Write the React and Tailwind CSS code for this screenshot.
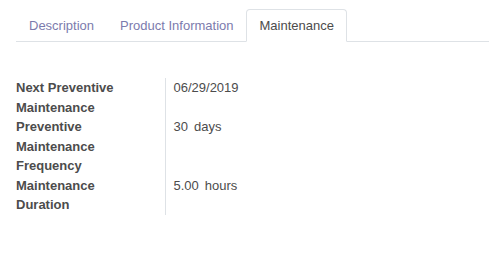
import React from "react";

const tabs = ["Description", "Product Information", "Maintenance"];

const rows = [
  { label: "Next Preventive Maintenance", value: "06/29/2019" },
  { label: "Preventive Maintenance Frequency", value: ["30", "days"] },
  { label: "Maintenance Duration", value: ["5.00", "hours"] },
];

const App = () => {
  return (
    <div className="h-[267px] w-[489px] bg-white text-[13px] text-[#4c4c4c] font-['Liberation_Sans',Arial,sans-serif]">
      <div className="pt-[9px]">
        {/* tabs */}
        <ul className="ml-4 flex border-b border-[#dee2e6]">
          {tabs.map((tab) => {
            const active = tab === "Maintenance";
            return (
              <li key={tab} className="-mb-px">
                <div
                  className={
                    active
                      ? "rounded-t-[4px] border border-[#dee2e6] border-b-white bg-white px-3 py-[7px] leading-[17px] text-[#4c4c4c]"
                      : "rounded-t-[4px] border border-transparent px-3 py-[7px] leading-[17px] text-[#7c7bad]"
                  }
                >
                  {tab}
                </div>
              </li>
            );
          })}
        </ul>

        {/* maintenance fields */}
        <table className="ml-4 mt-[36px] border-collapse leading-[19.5px]">
          <tbody>
            {rows.map((row) => (
              <tr key={row.label}>
                <td className="w-[149px] border-r border-[#dee2e6] pr-2 align-top font-bold text-[#4c4c4c]">
                  <div className="w-[120px]">{row.label}</div>
                </td>
                <td className="pl-2 align-top">
                  {Array.isArray(row.value) ? (
                    <span>
                      {row.value[0]}
                      <span className="ml-[6px]">{row.value[1]}</span>
                    </span>
                  ) : (
                    row.value
                  )}
                </td>
              </tr>
            ))}
          </tbody>
        </table>
      </div>
    </div>
  );
};

export default App;
